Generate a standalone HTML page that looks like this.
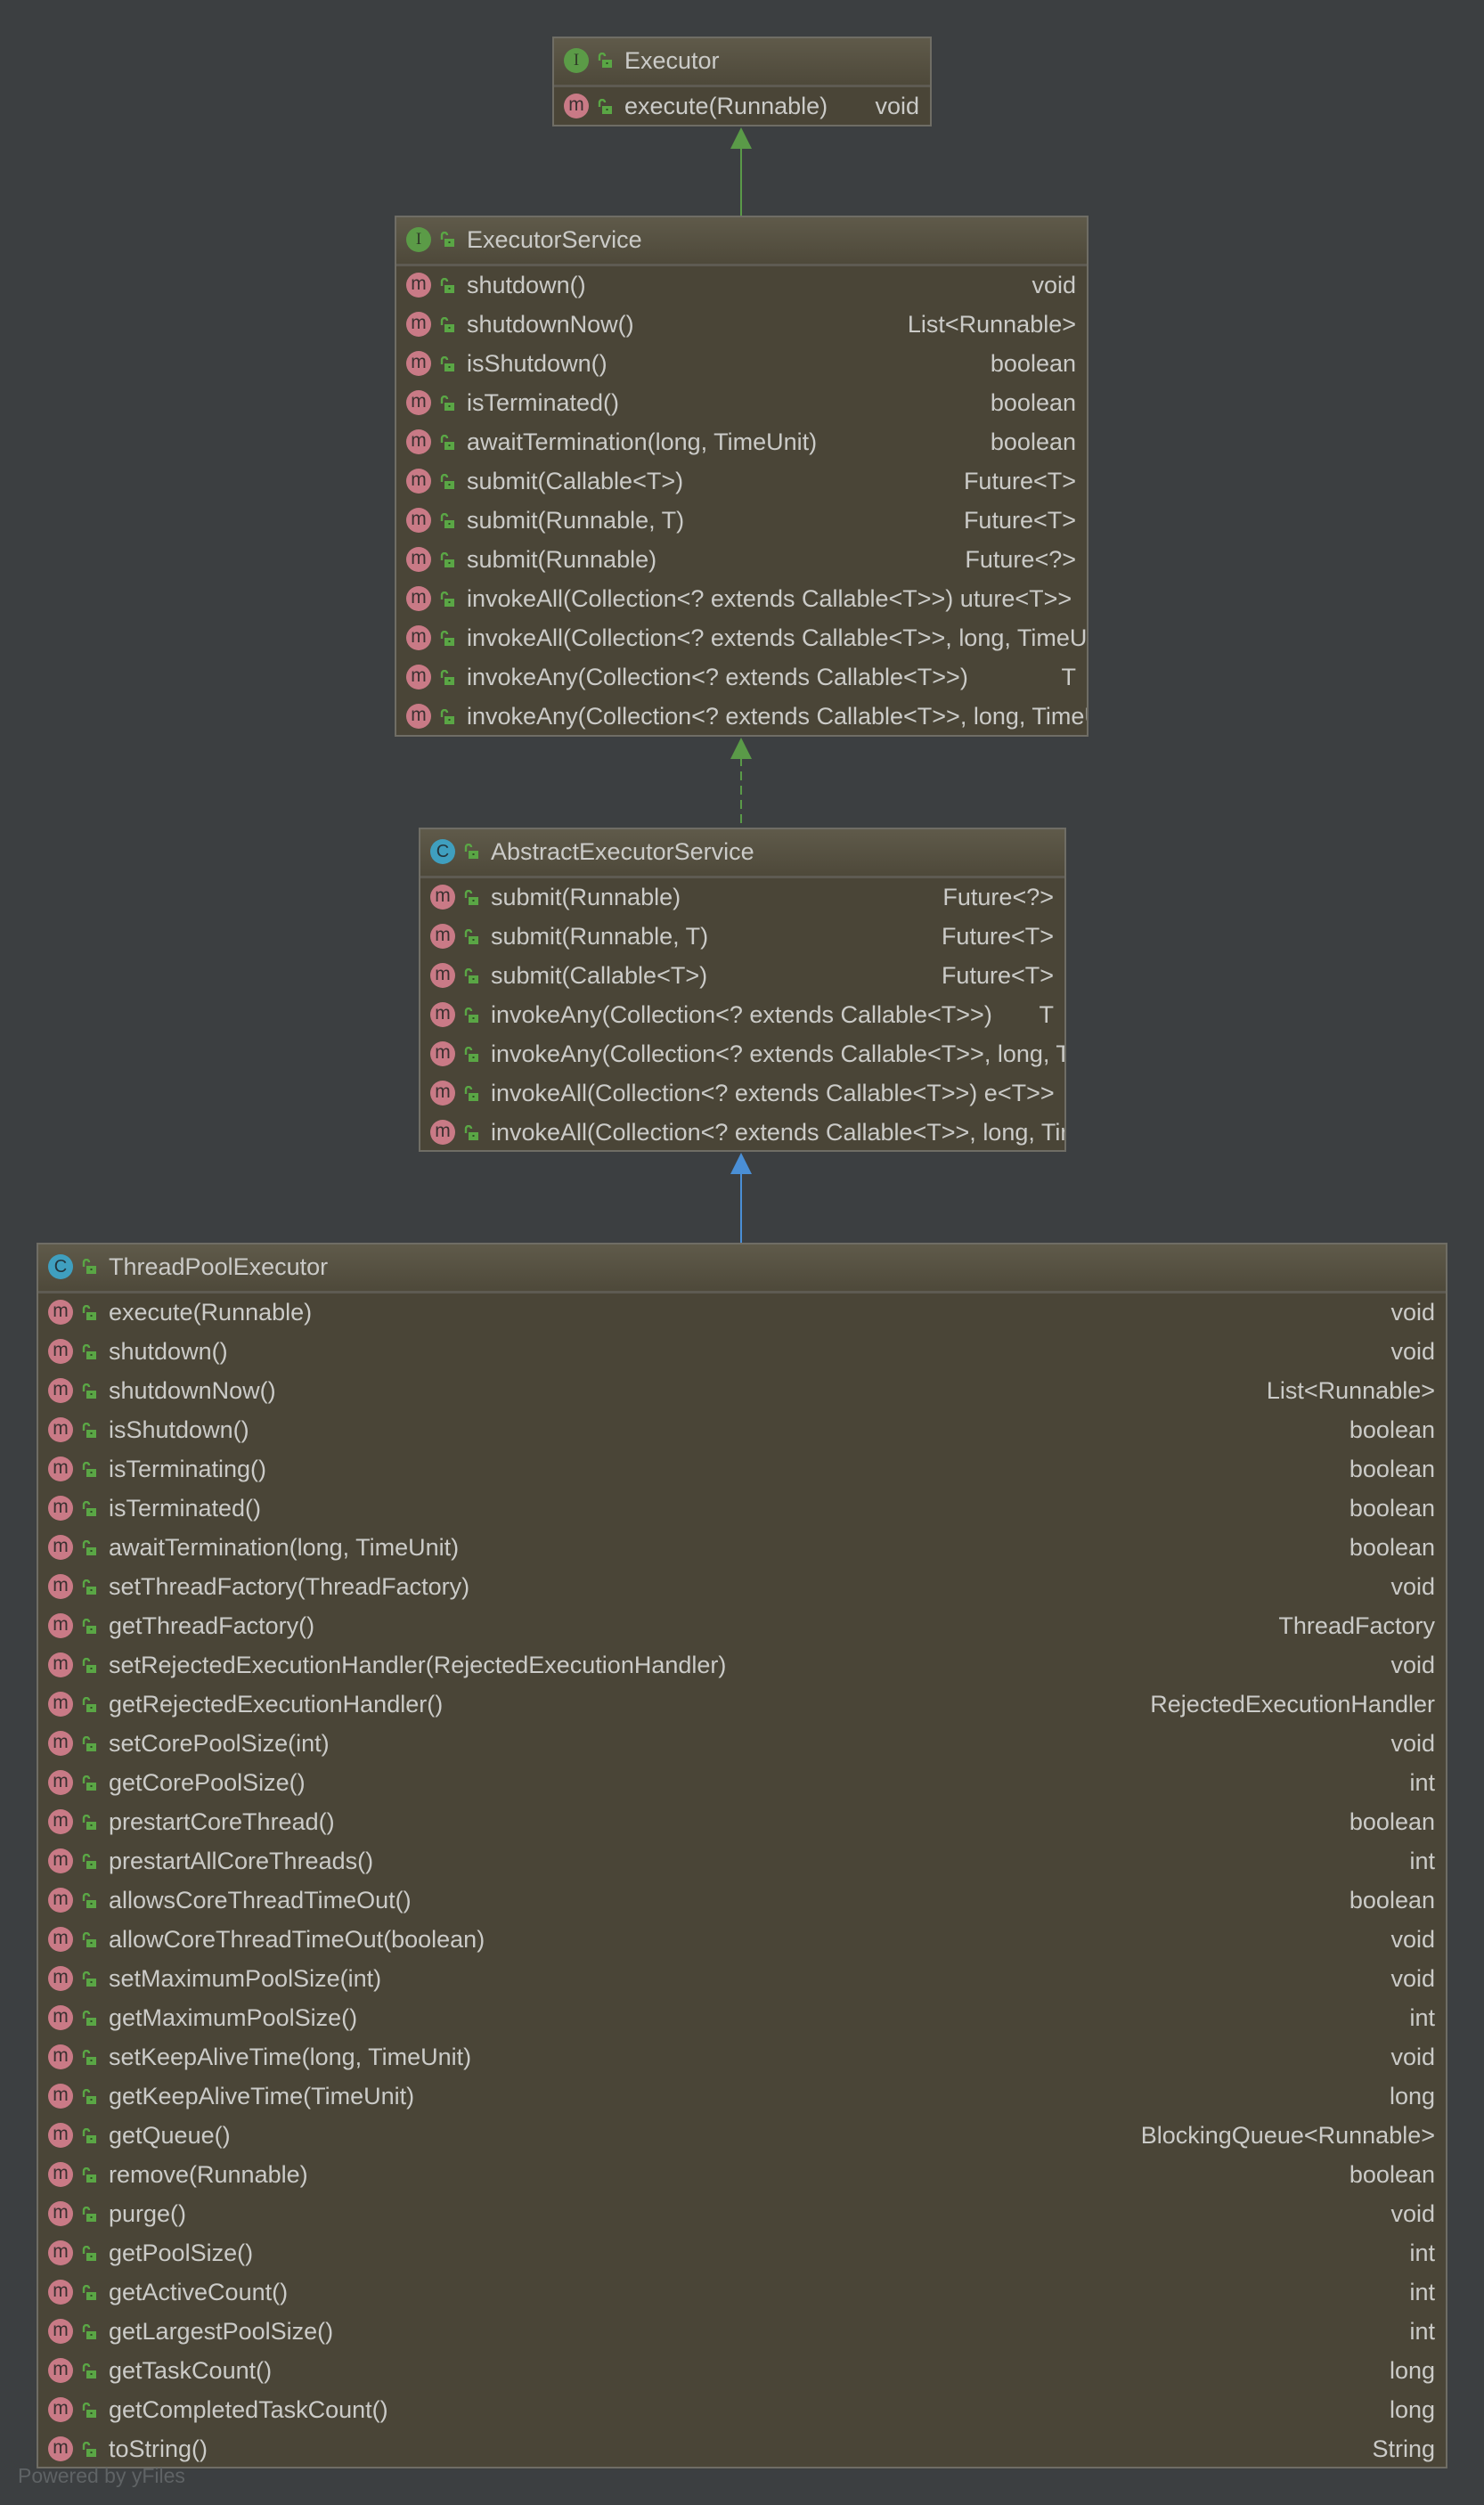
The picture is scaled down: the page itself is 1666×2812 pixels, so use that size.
<!DOCTYPE html>
<html><head><meta charset="utf-8"><style>
html,body{margin:0;padding:0}
body{width:1666px;height:2812px;background:#3c3f41;position:relative;overflow:hidden;font-family:"Liberation Sans",sans-serif;color:#cbcbc8}
.box{position:absolute;background:#4a4537;border:2px solid #6f6d65;overflow:hidden;box-sizing:border-box}
.hd{height:52px;background:linear-gradient(#5f5a4a,#4e493a);border-bottom:3px solid #5e5b52;position:relative;font-size:27px;line-height:50px}
.row{height:44px;line-height:42px;position:relative;font-size:27px;white-space:nowrap}
.ic{position:absolute;left:11px;top:7px;width:28px;height:28px;border-radius:50%;background:#c97a86;color:#3b3030;font-size:21px;line-height:26px;text-align:center}
.hd .ic{top:11px}
.ic.i{background:#5b9b47;color:#2f3a28;font-family:"Liberation Serif",serif;font-size:19px;line-height:28px}
.ic.c{background:#3f9fbf;color:#23343c;font-size:20px;line-height:28px}
.lk{position:absolute;left:49px;top:13px;width:18px;height:18px}
.hd .lk{top:16px}
.t{position:absolute;left:79px;top:0}
.r{position:absolute;right:12px;top:0;background:#4a4537;padding-left:6px}
.ln{position:absolute;left:831px;width:2px}
</style></head><body>

<svg width="0" height="0" style="position:absolute"><defs><symbol id="lock" viewBox="0 0 18 18"><path d="M2 9V4a3 3 0 0 1 6 0" fill="none" stroke="#5aa645" stroke-width="2.4"/><rect x="5" y="8" width="11" height="9" fill="#5aa645"/><rect x="9.5" y="11" width="2" height="2" fill="#2c4a22"/></symbol></defs></svg>

<div class="ln" style="top:165px;height:77px;background:#5a9a48"></div>
<svg style="position:absolute;left:819px;top:142px" width="26" height="26"><polygon points="13,1 25,25 1,25" fill="#5a9a48"/></svg>
<div class="ln" style="top:850px;height:79px;background:repeating-linear-gradient(#5a9a48 0 10px,transparent 10px 16px)"></div>
<svg style="position:absolute;left:819px;top:827px" width="26" height="26"><polygon points="13,1 25,25 1,25" fill="#5a9a48"/></svg>
<div class="ln" style="top:1316px;height:79px;background:#4a8fd6"></div>
<svg style="position:absolute;left:819px;top:1293px" width="26" height="26"><polygon points="13,1 25,25 1,25" fill="#4a8fd6"/></svg>

<div class="box" style="left:620px;top:41px;width:426px;height:101px">
<div class="hd"><span class="ic i">I</span><svg class="lk"><use href="#lock"/></svg><span class="t">Executor</span></div>
<div class="row"><span class="ic">m</span><svg class="lk"><use href="#lock"/></svg><span class="t">execute(Runnable)</span><span class="r">void</span></div>
</div>

<div class="box" style="left:443px;top:242px;width:779px;height:585px">
<div class="hd"><span class="ic i">I</span><svg class="lk"><use href="#lock"/></svg><span class="t">ExecutorService</span></div>
<div class="row"><span class="ic">m</span><svg class="lk"><use href="#lock"/></svg><span class="t">shutdown()</span><span class="r">void</span></div>
<div class="row"><span class="ic">m</span><svg class="lk"><use href="#lock"/></svg><span class="t">shutdownNow()</span><span class="r">List&lt;Runnable&gt;</span></div>
<div class="row"><span class="ic">m</span><svg class="lk"><use href="#lock"/></svg><span class="t">isShutdown()</span><span class="r">boolean</span></div>
<div class="row"><span class="ic">m</span><svg class="lk"><use href="#lock"/></svg><span class="t">isTerminated()</span><span class="r">boolean</span></div>
<div class="row"><span class="ic">m</span><svg class="lk"><use href="#lock"/></svg><span class="t">awaitTermination(long, TimeUnit)</span><span class="r">boolean</span></div>
<div class="row"><span class="ic">m</span><svg class="lk"><use href="#lock"/></svg><span class="t">submit(Callable&lt;T&gt;)</span><span class="r">Future&lt;T&gt;</span></div>
<div class="row"><span class="ic">m</span><svg class="lk"><use href="#lock"/></svg><span class="t">submit(Runnable, T)</span><span class="r">Future&lt;T&gt;</span></div>
<div class="row"><span class="ic">m</span><svg class="lk"><use href="#lock"/></svg><span class="t">submit(Runnable)</span><span class="r">Future&lt;?&gt;</span></div>
<div class="row"><span class="ic">m</span><svg class="lk"><use href="#lock"/></svg><span class="t">invokeAll(Collection&lt;? extends Callable&lt;T&gt;&gt;) uture&lt;T&gt;&gt;</span></div>
<div class="row"><span class="ic">m</span><svg class="lk"><use href="#lock"/></svg><span class="t">invokeAll(Collection&lt;? extends Callable&lt;T&gt;&gt;, long, TimeUnit)</span></div>
<div class="row"><span class="ic">m</span><svg class="lk"><use href="#lock"/></svg><span class="t">invokeAny(Collection&lt;? extends Callable&lt;T&gt;&gt;)</span><span class="r">T</span></div>
<div class="row"><span class="ic">m</span><svg class="lk"><use href="#lock"/></svg><span class="t">invokeAny(Collection&lt;? extends Callable&lt;T&gt;&gt;, long, TimeUnit)</span></div>
</div>

<div class="box" style="left:470px;top:929px;width:727px;height:364px">
<div class="hd"><span class="ic c">C</span><svg class="lk"><use href="#lock"/></svg><span class="t">AbstractExecutorService</span></div>
<div class="row"><span class="ic">m</span><svg class="lk"><use href="#lock"/></svg><span class="t">submit(Runnable)</span><span class="r">Future&lt;?&gt;</span></div>
<div class="row"><span class="ic">m</span><svg class="lk"><use href="#lock"/></svg><span class="t">submit(Runnable, T)</span><span class="r">Future&lt;T&gt;</span></div>
<div class="row"><span class="ic">m</span><svg class="lk"><use href="#lock"/></svg><span class="t">submit(Callable&lt;T&gt;)</span><span class="r">Future&lt;T&gt;</span></div>
<div class="row"><span class="ic">m</span><svg class="lk"><use href="#lock"/></svg><span class="t">invokeAny(Collection&lt;? extends Callable&lt;T&gt;&gt;)</span><span class="r">T</span></div>
<div class="row"><span class="ic">m</span><svg class="lk"><use href="#lock"/></svg><span class="t">invokeAny(Collection&lt;? extends Callable&lt;T&gt;&gt;, long, TimeUnit)</span></div>
<div class="row"><span class="ic">m</span><svg class="lk"><use href="#lock"/></svg><span class="t">invokeAll(Collection&lt;? extends Callable&lt;T&gt;&gt;) e&lt;T&gt;&gt;</span></div>
<div class="row"><span class="ic">m</span><svg class="lk"><use href="#lock"/></svg><span class="t">invokeAll(Collection&lt;? extends Callable&lt;T&gt;&gt;, long, TimeUnit)</span></div>
</div>

<div class="box" style="left:41px;top:1395px;width:1584px;height:1376px">
<div class="hd"><span class="ic c">C</span><svg class="lk"><use href="#lock"/></svg><span class="t">ThreadPoolExecutor</span></div>
<div class="row"><span class="ic">m</span><svg class="lk"><use href="#lock"/></svg><span class="t">execute(Runnable)</span><span class="r">void</span></div>
<div class="row"><span class="ic">m</span><svg class="lk"><use href="#lock"/></svg><span class="t">shutdown()</span><span class="r">void</span></div>
<div class="row"><span class="ic">m</span><svg class="lk"><use href="#lock"/></svg><span class="t">shutdownNow()</span><span class="r">List&lt;Runnable&gt;</span></div>
<div class="row"><span class="ic">m</span><svg class="lk"><use href="#lock"/></svg><span class="t">isShutdown()</span><span class="r">boolean</span></div>
<div class="row"><span class="ic">m</span><svg class="lk"><use href="#lock"/></svg><span class="t">isTerminating()</span><span class="r">boolean</span></div>
<div class="row"><span class="ic">m</span><svg class="lk"><use href="#lock"/></svg><span class="t">isTerminated()</span><span class="r">boolean</span></div>
<div class="row"><span class="ic">m</span><svg class="lk"><use href="#lock"/></svg><span class="t">awaitTermination(long, TimeUnit)</span><span class="r">boolean</span></div>
<div class="row"><span class="ic">m</span><svg class="lk"><use href="#lock"/></svg><span class="t">setThreadFactory(ThreadFactory)</span><span class="r">void</span></div>
<div class="row"><span class="ic">m</span><svg class="lk"><use href="#lock"/></svg><span class="t">getThreadFactory()</span><span class="r">ThreadFactory</span></div>
<div class="row"><span class="ic">m</span><svg class="lk"><use href="#lock"/></svg><span class="t">setRejectedExecutionHandler(RejectedExecutionHandler)</span><span class="r">void</span></div>
<div class="row"><span class="ic">m</span><svg class="lk"><use href="#lock"/></svg><span class="t">getRejectedExecutionHandler()</span><span class="r">RejectedExecutionHandler</span></div>
<div class="row"><span class="ic">m</span><svg class="lk"><use href="#lock"/></svg><span class="t">setCorePoolSize(int)</span><span class="r">void</span></div>
<div class="row"><span class="ic">m</span><svg class="lk"><use href="#lock"/></svg><span class="t">getCorePoolSize()</span><span class="r">int</span></div>
<div class="row"><span class="ic">m</span><svg class="lk"><use href="#lock"/></svg><span class="t">prestartCoreThread()</span><span class="r">boolean</span></div>
<div class="row"><span class="ic">m</span><svg class="lk"><use href="#lock"/></svg><span class="t">prestartAllCoreThreads()</span><span class="r">int</span></div>
<div class="row"><span class="ic">m</span><svg class="lk"><use href="#lock"/></svg><span class="t">allowsCoreThreadTimeOut()</span><span class="r">boolean</span></div>
<div class="row"><span class="ic">m</span><svg class="lk"><use href="#lock"/></svg><span class="t">allowCoreThreadTimeOut(boolean)</span><span class="r">void</span></div>
<div class="row"><span class="ic">m</span><svg class="lk"><use href="#lock"/></svg><span class="t">setMaximumPoolSize(int)</span><span class="r">void</span></div>
<div class="row"><span class="ic">m</span><svg class="lk"><use href="#lock"/></svg><span class="t">getMaximumPoolSize()</span><span class="r">int</span></div>
<div class="row"><span class="ic">m</span><svg class="lk"><use href="#lock"/></svg><span class="t">setKeepAliveTime(long, TimeUnit)</span><span class="r">void</span></div>
<div class="row"><span class="ic">m</span><svg class="lk"><use href="#lock"/></svg><span class="t">getKeepAliveTime(TimeUnit)</span><span class="r">long</span></div>
<div class="row"><span class="ic">m</span><svg class="lk"><use href="#lock"/></svg><span class="t">getQueue()</span><span class="r">BlockingQueue&lt;Runnable&gt;</span></div>
<div class="row"><span class="ic">m</span><svg class="lk"><use href="#lock"/></svg><span class="t">remove(Runnable)</span><span class="r">boolean</span></div>
<div class="row"><span class="ic">m</span><svg class="lk"><use href="#lock"/></svg><span class="t">purge()</span><span class="r">void</span></div>
<div class="row"><span class="ic">m</span><svg class="lk"><use href="#lock"/></svg><span class="t">getPoolSize()</span><span class="r">int</span></div>
<div class="row"><span class="ic">m</span><svg class="lk"><use href="#lock"/></svg><span class="t">getActiveCount()</span><span class="r">int</span></div>
<div class="row"><span class="ic">m</span><svg class="lk"><use href="#lock"/></svg><span class="t">getLargestPoolSize()</span><span class="r">int</span></div>
<div class="row"><span class="ic">m</span><svg class="lk"><use href="#lock"/></svg><span class="t">getTaskCount()</span><span class="r">long</span></div>
<div class="row"><span class="ic">m</span><svg class="lk"><use href="#lock"/></svg><span class="t">getCompletedTaskCount()</span><span class="r">long</span></div>
<div class="row"><span class="ic">m</span><svg class="lk"><use href="#lock"/></svg><span class="t">toString()</span><span class="r">String</span></div>
</div>

<div style="position:absolute;left:20px;top:2766px;font-size:23px;color:#5f6365">Powered by yFiles</div>
</body></html>
